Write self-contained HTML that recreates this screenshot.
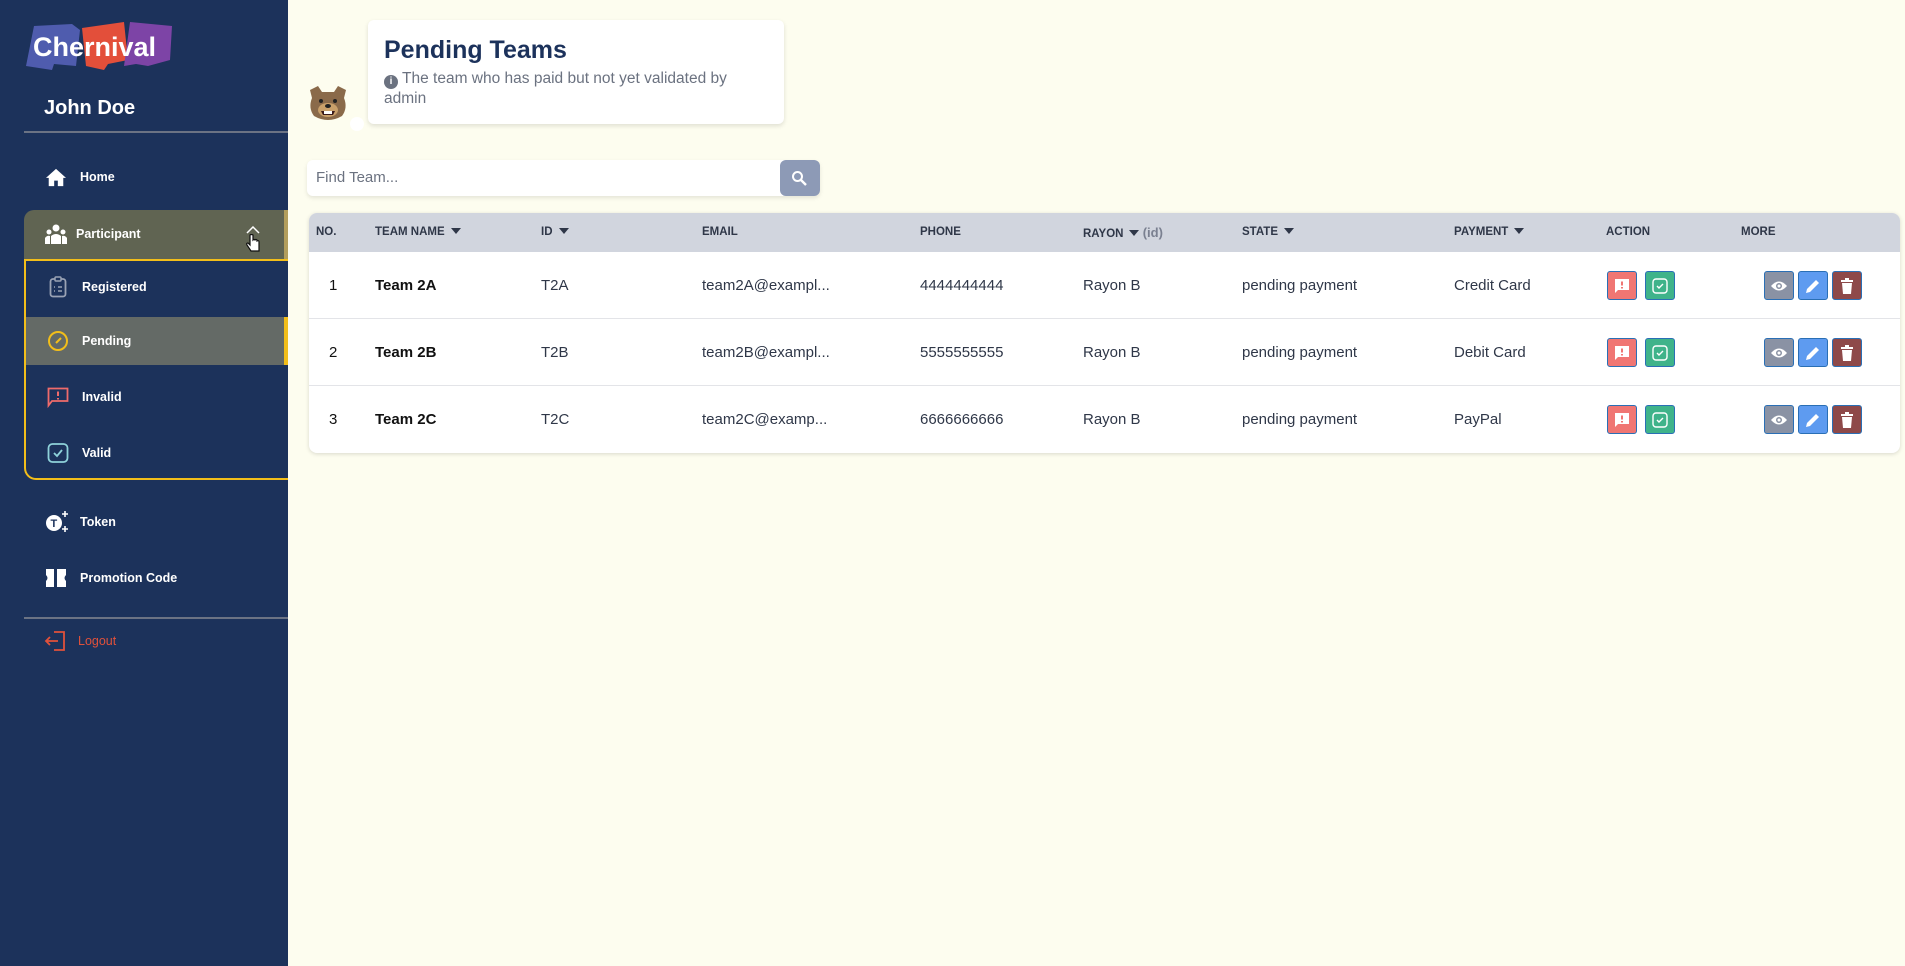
<!DOCTYPE html>
<html><head><meta charset="utf-8"><style>
*{box-sizing:border-box;margin:0;padding:0}
body{width:1905px;height:966px;background:#fdfdef;font-family:"Liberation Sans",sans-serif;position:relative;overflow:hidden}
.sb{position:absolute;left:0;top:0;width:288px;height:966px;background:#1c325b}
.abs{position:absolute}
.nav{position:absolute;left:0;width:288px;color:#fff;font-size:12.5px;font-weight:bold;display:flex;align-items:center}
.nav svg{position:absolute}
.hd{position:absolute;top:213px;height:39px;line-height:39px;font-size:11.5px;font-weight:bold;color:#2f3748}
.cell{position:absolute;font-size:15px;color:#2f3748}
.btn{position:absolute;width:30px;height:29px;border:1.5px solid #2a6fb5;border-radius:3px;display:flex;align-items:center;justify-content:center}
.tri{display:inline-block;width:0;height:0;border-left:5px solid transparent;border-right:5px solid transparent;border-top:6px solid #2f3748;margin-left:6px;vertical-align:1px}
</style></head><body>
<div class="sb">
  <svg class="abs" style="left:24px;top:20px" width="152" height="52" viewBox="0 0 152 52">
    <path d="M10 6 L48 4 L56 10 L52 46 L30 44 L28 50 L2 46 Z" fill="#4f5cae"/>
    <path d="M58 8 L100 2 L104 40 L84 44 L80 50 L62 46 Z" fill="#e34f3a"/>
    <path d="M106 2 L148 6 L146 40 L124 46 L112 44 L100 46 Z" fill="#7d44a6"/>
    <text x="9" y="36" font-family="Liberation Sans" font-weight="bold" font-size="27" fill="#fff">Chernival</text>
  </svg>
  <div class="abs" style="left:44px;top:97px;color:#fff;font-size:20px;font-weight:bold">John Doe</div>
  <div class="abs" style="left:24px;top:131px;width:264px;height:2px;background:#6b7384"></div>

  <div class="nav" style="top:165px;height:24px">
    <svg style="left:45px" width="22" height="20" viewBox="0 0 24 22"><path d="M12 2 L1 12 H4 V21 H10 V15 H14 V21 H20 V12 H23 Z" fill="#fff"/></svg>
    <span style="margin-left:80px">Home</span>
  </div>

  <div class="abs" style="left:24px;top:210px;width:264px;height:49px;background:#606452;border-radius:10px 0 0 0;border-right:4px solid #b29d5c"></div>
  <div class="nav" style="top:222px;height:24px">
    <svg style="left:45px" width="22" height="20" viewBox="0 0 22 20"><circle cx="11" cy="4" r="3.5" fill="#fff"/><circle cx="4" cy="8" r="2.5" fill="#fff"/><circle cx="18" cy="8" r="2.5" fill="#fff"/><path d="M6 20 V12 Q11 8 16 12 V20 Z M0 20 V14 Q2 11 5 12 V20 Z M22 20 V14 Q20 11 17 12 V20Z" fill="#fff"/></svg>
    <span style="margin-left:76px">Participant</span>
    <svg style="left:246px;top:4px" width="14" height="8" viewBox="0 0 14 8"><path d="M1 7 L7 1 L13 7" stroke="#fff" stroke-width="1.5" fill="none"/></svg>
    <svg style="left:245px;top:12px" width="16" height="18" viewBox="0 0 16 18"><path d="M5 1 V11 L3 9 Q1 9 2 11 L6 17 H14 V8 Q14 6 12 7 V6 Q11 5 10 6 Q9 5 8 6 V1 Q6 0 5 1Z" fill="#fff" stroke="#111" stroke-width="1.2"/></svg>
  </div>

  <div class="abs" style="left:24px;top:259px;width:264px;height:221px;border:2px solid #f2be1a;border-right:none;border-radius:0 0 0 12px"></div>
  <div class="abs" style="left:26px;top:317px;width:262px;height:48px;background:#646a66;border-right:4px solid #f2be1a"></div>

  <div class="nav" style="top:275px;height:24px">
    <svg style="left:49px" width="18" height="22" viewBox="0 0 18 22"><rect x="1.5" y="3" width="15" height="17.5" rx="2.5" stroke="#9aa3b5" stroke-width="1.8" fill="none"/><rect x="6" y="1" width="6" height="4" rx="1" stroke="#9aa3b5" stroke-width="1.5" fill="#1c325b"/><path d="M5 11h1M9 11h4M5 15h1M9 15h4" stroke="#9aa3b5" stroke-width="1.6"/></svg>
    <span style="margin-left:82px">Registered</span>
  </div>
  <div class="nav" style="top:329px;height:24px">
    <svg style="left:47px" width="22" height="22" viewBox="0 0 22 22"><circle cx="11" cy="11" r="9" stroke="#f2be1a" stroke-width="2" fill="none"/><path d="M9 13 L14 8" stroke="#f2be1a" stroke-width="2"/></svg>
    <span style="margin-left:82px">Pending</span>
  </div>
  <div class="nav" style="top:385px;height:24px">
    <svg style="left:47px" width="22" height="22" viewBox="0 0 22 22"><path d="M1.5 2.5 H20.5 V15 H5 L1.5 19.5 Z" stroke="#ef6b6b" stroke-width="1.8" fill="none"/><path d="M11 5.5 V10 M11 12 V13.5" stroke="#ef6b6b" stroke-width="2"/></svg>
    <span style="margin-left:82px">Invalid</span>
  </div>
  <div class="nav" style="top:441px;height:24px">
    <svg style="left:47px" width="22" height="22" viewBox="0 0 22 22"><rect x="1.5" y="2" width="19" height="18" rx="4" stroke="#8ed2da" stroke-width="1.8" fill="none"/><path d="M7 11 L10 14 L15 8" stroke="#8ed2da" stroke-width="1.8" fill="none"/></svg>
    <span style="margin-left:82px">Valid</span>
  </div>

  <div class="nav" style="top:510px;height:24px">
    <svg style="left:45px" width="24" height="24" viewBox="0 0 24 24"><circle cx="9" cy="13" r="8" fill="#fff"/><text x="5.5" y="17" font-size="11" font-weight="bold" font-family="Liberation Sans" fill="#1c325b">T</text><path d="M20 1 V7 M17 4 H23 M20 16 V22 M17 19 H23" stroke="#fff" stroke-width="1.6"/></svg>
    <span style="margin-left:80px">Token</span>
  </div>
  <div class="nav" style="top:566px;height:24px">
    <svg style="left:46px" width="20" height="20" viewBox="0 0 20 20"><path d="M0 1 H8 V19 H0 V13 Q3 10 0 7 Z M11 1 H20 V7 Q17 10 20 13 V19 H11 Z" fill="#fff"/></svg>
    <span style="margin-left:80px">Promotion Code</span>
  </div>
  <div class="abs" style="left:24px;top:617px;width:264px;height:2px;background:#6b7384"></div>
  <div class="nav" style="top:629px;height:24px;color:#e0513b;font-weight:normal">
    <svg style="left:44px" width="22" height="20" viewBox="0 0 22 20"><path d="M10 1 H20 V19 H10" stroke="#e0513b" stroke-width="1.8" fill="none"/><path d="M2 10 H14 M6 6 L2 10 L6 14" stroke="#e0513b" stroke-width="1.8" fill="none"/></svg>
    <span style="margin-left:78px">Logout</span>
  </div>
</div>

<svg class="abs" style="left:306px;top:82px" width="44" height="42" viewBox="0 0 44 42">
  <path d="M4 8 L12 4 L16 10 H28 L32 4 L40 8 L38 16 Q42 26 36 34 Q22 42 8 34 Q2 26 6 16 Z" fill="#8a6a4a"/>
  <ellipse cx="22" cy="28" rx="10" ry="7" fill="#c9a06a"/>
  <circle cx="15" cy="19" r="2" fill="#222"/><circle cx="29" cy="19" r="2" fill="#222"/>
  <ellipse cx="22" cy="24" rx="3" ry="2" fill="#222"/>
  <path d="M15 29 H29 L27 33 H17Z" fill="#3a1a1a"/><rect x="18" y="29" width="8" height="3" fill="#fff"/>
</svg>
<div class="abs" style="left:350px;top:117px;width:14px;height:14px;border-radius:50%;background:#fff"></div>
<div class="abs" style="left:368px;top:20px;width:416px;height:104px;background:#fff;border-radius:6px;box-shadow:0 2px 5px rgba(0,0,0,.12)"></div>
<div class="abs" style="left:384px;top:36px;font-size:25px;font-weight:bold;color:#1c325b">Pending Teams</div>
<div class="abs" style="left:384px;top:69px;width:370px;font-size:15.5px;line-height:19px;color:#6b7280">
  <span style="display:inline-block;width:14px;height:14px;border-radius:50%;background:#6b7280;color:#fff;font-size:10px;font-weight:bold;text-align:center;line-height:14px;vertical-align:-1px">i</span> The team who has paid but not yet validated by admin</div>

<div class="abs" style="left:307px;top:160px;width:513px;height:36px;background:#fff;border-radius:6px;box-shadow:0 2px 4px rgba(0,0,0,.1)"></div>
<div class="abs" style="left:316px;top:169px;font-size:15px;color:#6b7280">Find Team...</div>
<div class="abs" style="left:780px;top:160px;width:40px;height:36px;background:#8d9ab6;border-radius:6px"></div>
<svg class="abs" style="left:791px;top:170px" width="17" height="17" viewBox="0 0 17 17"><circle cx="6.5" cy="6.5" r="4.5" stroke="#fff" stroke-width="2" fill="none"/><path d="M10 10 L15 15" stroke="#fff" stroke-width="2.4"/></svg>

<div class="abs" style="left:309px;top:213px;width:1591px;height:240px;background:#fff;border-radius:8px;box-shadow:0 1px 4px rgba(0,0,0,.15);overflow:hidden">
  <div style="height:39px;background:#d1d5de"></div>
  <div style="position:absolute;top:105px;left:0;width:100%;height:1px;background:#e3e4e8"></div>
  <div style="position:absolute;top:172px;left:0;width:100%;height:1px;background:#e3e4e8"></div>
</div>
<div class="hd" style="left:316px">NO.</div>
<div class="hd" style="left:375px">TEAM NAME<span class="tri"></span></div>
<div class="hd" style="left:541px">ID<span class="tri"></span></div>
<div class="hd" style="left:702px">EMAIL</div>
<div class="hd" style="left:920px">PHONE</div>
<div class="hd" style="left:1083px">RAYON<span class="tri"></span> <span style="color:#7a8090;font-size:13px">(id)</span></div>
<div class="hd" style="left:1242px">STATE<span class="tri"></span></div>
<div class="hd" style="left:1454px">PAYMENT<span class="tri"></span></div>
<div class="hd" style="left:1606px">ACTION</div>
<div class="hd" style="left:1741px">MORE</div>

<div id="rows"></div>
<script>
var d=[["1","Team 2A","T2A","team2A@exampl...","4444444444","Credit Card"],["2","Team 2B","T2B","team2B@exampl...","5555555555","Debit Card"],["3","Team 2C","T2C","team2C@examp...","6666666666","PayPal"]];
var h="";
d.forEach(function(r,i){var y=277+i*67;
h+='<div class="cell" style="left:329px;top:'+y+'px;color:#111">'+r[0]+'</div>';
h+='<div class="cell" style="left:375px;top:'+y+'px;color:#111;font-weight:bold">'+r[1]+'</div>';
h+='<div class="cell" style="left:541px;top:'+y+'px">'+r[2]+'</div>';
h+='<div class="cell" style="left:702px;top:'+y+'px">'+r[3]+'</div>';
h+='<div class="cell" style="left:920px;top:'+y+'px">'+r[4]+'</div>';
h+='<div class="cell" style="left:1083px;top:'+y+'px">Rayon B</div>';
h+='<div class="cell" style="left:1242px;top:'+y+'px">pending payment</div>';
h+='<div class="cell" style="left:1454px;top:'+y+'px">'+r[5]+'</div>';
var by=y-6;
h+='<div class="btn" style="left:1607px;top:'+by+'px;background:#f07673"><svg width="16" height="16" viewBox="0 0 16 16"><path d="M1 1H15V12H4L1 15Z" fill="#fff"/><path d="M8 3.5V7.5M8 9V10.5" stroke="#f07673" stroke-width="2"/></svg></div>';
h+='<div class="btn" style="left:1645px;top:'+by+'px;background:#3fb38a"><svg width="16" height="16" viewBox="0 0 16 16"><rect x="1" y="1" width="14" height="14" rx="3" stroke="#fff" stroke-width="1.4" fill="none"/><path d="M5 8L7 10L11 6" stroke="#fff" stroke-width="1.4" fill="none"/></svg></div>';
h+='<div class="btn" style="left:1764px;top:'+by+'px;background:#8a92a4"><svg width="18" height="12" viewBox="0 0 18 12"><path d="M1 6Q9 -3 17 6Q9 15 1 6Z" fill="#fff"/><circle cx="9" cy="6" r="3" fill="#8a92a4"/><circle cx="9" cy="6" r="1.5" fill="#fff"/></svg></div>';
h+='<div class="btn" style="left:1798px;top:'+by+'px;background:#5e9bf0"><svg width="16" height="16" viewBox="0 0 16 16"><path d="M1 15L2 11L11 2L14 5L5 14Z" fill="#fff"/></svg></div>';
h+='<div class="btn" style="left:1832px;top:'+by+'px;background:#8e4949"><svg width="14" height="16" viewBox="0 0 14 16"><path d="M1 2H13V4H1ZM5 0H9V2H5ZM2 5H12L11 16H3Z" fill="#fff"/></svg></div>';
});
document.getElementById("rows").innerHTML=h;
</script>
</body></html>
